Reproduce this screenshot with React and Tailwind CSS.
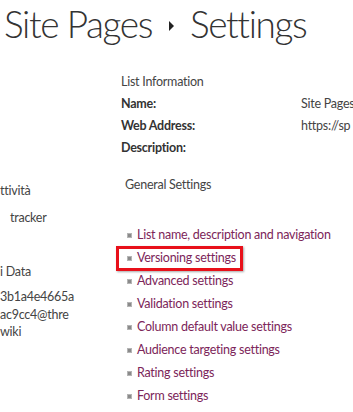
import React from "react";

const generalLinks = [
  "List name, description and navigation",
  "Versioning settings",
  "Advanced settings",
  "Validation settings",
  "Column default value settings",
  "Audience targeting settings",
  "Rating settings",
  "Form settings",
];

const Bullet = () => (
  <span className="inline-block w-[5px] h-[5px] bg-[#8a8a8a] border border-[#b5b5b5] mr-[5px] shrink-0" />
);

const App = () => {
  return (
    <div className="w-[353px] h-[412px] overflow-hidden bg-white font-['Lato',sans-serif] text-[12.5px] tracking-[-0.25px] text-[#444]">
      {/* Title */}
      <div className="h-[60px] flex items-center pl-[4px] pb-[13px] text-[#333] font-light text-[37px] tracking-[-1.4px] leading-none whitespace-nowrap">
        <span>Site Pages</span>
        <svg width="7" height="10" viewBox="0 0 7 10" className="ml-[16px] mr-[15px] mt-[4px]">
          <path d="M1 0 L6 5 L1 10 Z" fill="#222" />
        </svg>
        <span>Settings</span>
      </div>

      <div className="flex">
        {/* Left column (clipped) */}
        <div className="w-[121px] shrink-0 overflow-hidden text-[#444] leading-[22px]">
          <div className="mt-[120px]">ttività</div>
          <div className="mt-[5px] pl-[10px]">tracker</div>
          <div className="mt-[32px]">i Data</div>
          <div className="mt-[5px] leading-[17.5px]">
            <div>3b1a4e4665a</div>
            <div>ac9cc4@thre</div>
            <div>wiki</div>
          </div>
        </div>

        {/* Right column */}
        <div className="flex-1 min-w-0">
          <div className="mt-[11px] leading-[22px]">List Information</div>
          <div className="leading-[22px]">
            <div className="flex whitespace-nowrap">
              <span className="w-[180px] shrink-0 font-bold text-[#333]">Name:</span>
              <span>Site Pages</span>
            </div>
            <div className="flex whitespace-nowrap">
              <span className="w-[180px] shrink-0 font-bold text-[#333]">Web Address:</span>
              <span>https://sp</span>
            </div>
            <div className="flex whitespace-nowrap">
              <span className="w-[180px] shrink-0 font-bold text-[#333]">Description:</span>
              <span></span>
            </div>
          </div>

          <div className="mt-[15px] pl-[4px] leading-[22px]">General Settings</div>

          <ul className="mt-[28px] pl-[6px]">
            {generalLinks.map((label, i) => (
              <li key={label} className="relative h-[23px] flex items-center whitespace-nowrap">
                {i === 1 && (
                  <span className="absolute left-[-11px] top-[-1px] w-[127px] h-[25px] border-[3px] border-[#e8101a] shadow-[1px_1px_2px_rgba(0,0,0,0.35)]" />
                )}
                <Bullet />
                <span className="text-[#7c2559]">{label}</span>
              </li>
            ))}
          </ul>
        </div>
      </div>
    </div>
  );
};

export default App;
